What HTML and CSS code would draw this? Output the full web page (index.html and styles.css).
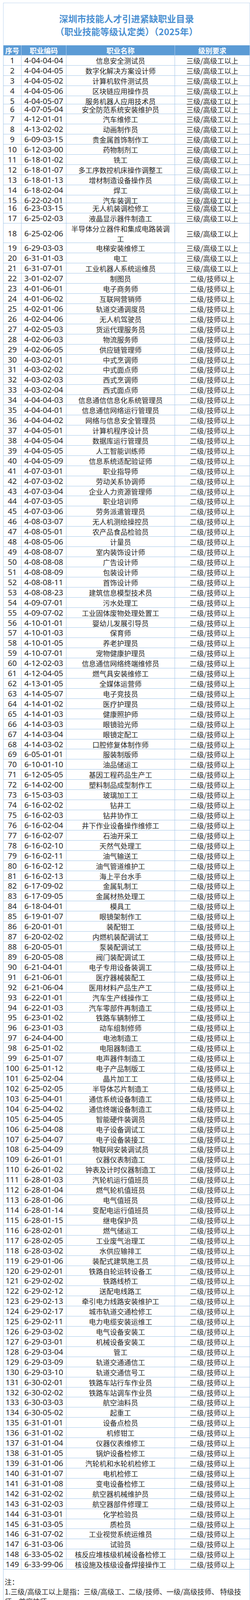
FILE: index.html
```html
<!DOCTYPE html>
<html lang="zh-CN">
<head>
<meta charset="utf-8">
<title>深圳市技能人才引进紧缺职业目录</title>
<link rel="stylesheet" href="styles.css">
</head>
<body>
<div class="sheet">
  <div class="title-box">
    <h1 class="title">深圳市技能人才引进紧缺职业目录<br>（职业技能等级认定类）（2025年）</h1>
  </div>
  <div class="table">
    <div class="row head"><div class="cell">序号</div><div class="cell">职业编码</div><div class="cell">职业名称</div><div class="cell">级别要求</div></div>
    <div class="row"><div class="cell num">1</div><div class="cell code">4-04-04-04</div><div class="cell name">信息安全测试员</div><div class="cell lvl">三级/高级工以上</div></div>
    <div class="row"><div class="cell num">2</div><div class="cell code">4-04-04-05</div><div class="cell name">数字化解决方案设计师</div><div class="cell lvl">三级/高级工以上</div></div>
    <div class="row"><div class="cell num">3</div><div class="cell code">4-04-05-02</div><div class="cell name">计算机软件测试员</div><div class="cell lvl">三级/高级工以上</div></div>
    <div class="row"><div class="cell num">4</div><div class="cell code">4-04-05-06</div><div class="cell name">区块链应用操作员</div><div class="cell lvl">三级/高级工以上</div></div>
    <div class="row short"><div class="cell num">5</div><div class="cell code">4-04-05-07</div><div class="cell name">服务机器人应用技术员</div><div class="cell lvl">三级/高级工以上</div></div>
    <div class="row"><div class="cell num">6</div><div class="cell code">4-07-05-04</div><div class="cell name">安全防范系统安装维护员</div><div class="cell lvl">三级/高级工以上</div></div>
    <div class="row"><div class="cell num">7</div><div class="cell code">4-12-01-01</div><div class="cell name">汽车维修工</div><div class="cell lvl">三级/高级工以上</div></div>
    <div class="row"><div class="cell num">8</div><div class="cell code">4-13-02-02</div><div class="cell name">动画制作员</div><div class="cell lvl">三级/高级工以上</div></div>
    <div class="row"><div class="cell num">9</div><div class="cell code">6-09-03-15</div><div class="cell name">贵金属首饰制作工</div><div class="cell lvl">三级/高级工以上</div></div>
    <div class="row"><div class="cell num">10</div><div class="cell code">6-12-03-00</div><div class="cell name">药物制剂工</div><div class="cell lvl">三级/高级工以上</div></div>
    <div class="row"><div class="cell num">11</div><div class="cell code">6-18-01-02</div><div class="cell name">铣工</div><div class="cell lvl">三级/高级工以上</div></div>
    <div class="row"><div class="cell num">12</div><div class="cell code">6-18-01-07</div><div class="cell name">多工序数控机床操作调整工</div><div class="cell lvl">三级/高级工以上</div></div>
    <div class="row"><div class="cell num">13</div><div class="cell code">6-18-01-13</div><div class="cell name">增材制造设备操作员</div><div class="cell lvl">三级/高级工以上</div></div>
    <div class="row"><div class="cell num">14</div><div class="cell code">6-18-02-04</div><div class="cell name">焊工</div><div class="cell lvl">三级/高级工以上</div></div>
    <div class="row shorter"><div class="cell num">15</div><div class="cell code">6-22-02-01</div><div class="cell name">汽车装调工</div><div class="cell lvl">三级/高级工以上</div></div>
    <div class="row"><div class="cell num">16</div><div class="cell code">6-23-03-15</div><div class="cell name">无人机装调检修工</div><div class="cell lvl">三级/高级工以上</div></div>
    <div class="row"><div class="cell num">17</div><div class="cell code">6-25-02-03</div><div class="cell name">液晶显示器件制造工</div><div class="cell lvl">三级/高级工以上</div></div>
    <div class="row tall"><div class="cell num">18</div><div class="cell code">6-25-02-06</div><div class="cell name">半导体分立器件和集成电路装调工</div><div class="cell lvl">三级/高级工以上</div></div>
    <div class="row"><div class="cell num">19</div><div class="cell code">6-29-03-03</div><div class="cell name">电梯安装维修工</div><div class="cell lvl">三级/高级工以上</div></div>
    <div class="row"><div class="cell num">20</div><div class="cell code">6-31-01-03</div><div class="cell name">电工</div><div class="cell lvl">三级/高级工以上</div></div>
    <div class="row"><div class="cell num">21</div><div class="cell code">6-31-07-01</div><div class="cell name">工业机器人系统运维员</div><div class="cell lvl">三级/高级工以上</div></div>
    <div class="row"><div class="cell num">22</div><div class="cell code">3-01-02-07</div><div class="cell name">制图员</div><div class="cell lvl">二级/技师以上</div></div>
    <div class="row"><div class="cell num">23</div><div class="cell code">4-01-06-01</div><div class="cell name">电子商务师</div><div class="cell lvl">二级/技师以上</div></div>
    <div class="row"><div class="cell num">24</div><div class="cell code">4-01-06-02</div><div class="cell name">互联网营销师</div><div class="cell lvl">二级/技师以上</div></div>
    <div class="row"><div class="cell num">25</div><div class="cell code">4-02-01-06</div><div class="cell name">轨道交通调度员</div><div class="cell lvl">二级/技师以上</div></div>
    <div class="row"><div class="cell num">26</div><div class="cell code">4-02-04-06</div><div class="cell name">无人机驾驶员</div><div class="cell lvl">二级/技师以上</div></div>
    <div class="row"><div class="cell num">27</div><div class="cell code">4-02-05-03</div><div class="cell name">货运代理服务员</div><div class="cell lvl">二级/技师以上</div></div>
    <div class="row"><div class="cell num">28</div><div class="cell code">4-02-06-03</div><div class="cell name">物流服务师</div><div class="cell lvl">二级/技师以上</div></div>
    <div class="row"><div class="cell num">29</div><div class="cell code">4-02-06-05</div><div class="cell name">供应链管理师</div><div class="cell lvl">二级/技师以上</div></div>
    <div class="row"><div class="cell num">30</div><div class="cell code">4-03-02-01</div><div class="cell name">中式烹调师</div><div class="cell lvl">二级/技师以上</div></div>
    <div class="row"><div class="cell num">31</div><div class="cell code">4-03-02-02</div><div class="cell name">中式面点师</div><div class="cell lvl">二级/技师以上</div></div>
    <div class="row"><div class="cell num">32</div><div class="cell code">4-03-02-03</div><div class="cell name">西式烹调师</div><div class="cell lvl">二级/技师以上</div></div>
    <div class="row"><div class="cell num">33</div><div class="cell code">4-03-02-04</div><div class="cell name">西式面点师</div><div class="cell lvl">二级/技师以上</div></div>
    <div class="row"><div class="cell num">34</div><div class="cell code">4-04-04-03</div><div class="cell name">信息通信信息化系统管理员</div><div class="cell lvl">二级/技师以上</div></div>
    <div class="row"><div class="cell num">35</div><div class="cell code">4-04-04-01</div><div class="cell name">信息通信网络运行管理员</div><div class="cell lvl">二级/技师以上</div></div>
    <div class="row"><div class="cell num">36</div><div class="cell code">4-04-04-02</div><div class="cell name">网络与信息安全管理员</div><div class="cell lvl">二级/技师以上</div></div>
    <div class="row"><div class="cell num">37</div><div class="cell code">4-04-05-01</div><div class="cell name">计算机程序设计员</div><div class="cell lvl">二级/技师以上</div></div>
    <div class="row"><div class="cell num">38</div><div class="cell code">4-04-05-04</div><div class="cell name">数据库运行管理员</div><div class="cell lvl">二级/技师以上</div></div>
    <div class="row"><div class="cell num">39</div><div class="cell code">4-04-05-05</div><div class="cell name">人工智能训练师</div><div class="cell lvl">二级/技师以上</div></div>
    <div class="row"><div class="cell num">40</div><div class="cell code">4-04-05-09</div><div class="cell name">信息系统适配验证师</div><div class="cell lvl">二级/技师以上</div></div>
    <div class="row"><div class="cell num">41</div><div class="cell code">4-07-03-01</div><div class="cell name">职业指导师</div><div class="cell lvl">二级/技师以上</div></div>
    <div class="row"><div class="cell num">42</div><div class="cell code">4-07-03-02</div><div class="cell name">劳动关系协调师</div><div class="cell lvl">二级/技师以上</div></div>
    <div class="row"><div class="cell num">43</div><div class="cell code">4-07-03-04</div><div class="cell name">企业人力资源管理师</div><div class="cell lvl">二级/技师以上</div></div>
    <div class="row"><div class="cell num">44</div><div class="cell code">4-07-03-05</div><div class="cell name">职业培训师</div><div class="cell lvl">二级/技师以上</div></div>
    <div class="row"><div class="cell num">45</div><div class="cell code">4-07-03-06</div><div class="cell name">劳务派遣管理员</div><div class="cell lvl">二级/技师以上</div></div>
    <div class="row"><div class="cell num">46</div><div class="cell code">4-08-03-07</div><div class="cell name">无人机测绘操控员</div><div class="cell lvl">二级/技师以上</div></div>
    <div class="row"><div class="cell num">47</div><div class="cell code">4-08-05-01</div><div class="cell name">农产品食品检验员</div><div class="cell lvl">二级/技师以上</div></div>
    <div class="row"><div class="cell num">48</div><div class="cell code">4-08-05-06</div><div class="cell name">计量员</div><div class="cell lvl">二级/技师以上</div></div>
    <div class="row"><div class="cell num">49</div><div class="cell code">4-08-08-07</div><div class="cell name">室内装饰设计师</div><div class="cell lvl">二级/技师以上</div></div>
    <div class="row"><div class="cell num">50</div><div class="cell code">4-08-08-08</div><div class="cell name">广告设计师</div><div class="cell lvl">二级/技师以上</div></div>
    <div class="row"><div class="cell num">51</div><div class="cell code">4-08-08-09</div><div class="cell name">包装设计师</div><div class="cell lvl">二级/技师以上</div></div>
    <div class="row"><div class="cell num">52</div><div class="cell code">4-08-08-11</div><div class="cell name">首饰设计师</div><div class="cell lvl">二级/技师以上</div></div>
    <div class="row"><div class="cell num">53</div><div class="cell code">4-08-08-23</div><div class="cell name">建筑信息模型技术员</div><div class="cell lvl">二级/技师以上</div></div>
    <div class="row"><div class="cell num">54</div><div class="cell code">4-09-07-01</div><div class="cell name">污水处理工</div><div class="cell lvl">二级/技师以上</div></div>
    <div class="row"><div class="cell num">55</div><div class="cell code">4-09-07-02</div><div class="cell name">工业固体废物处理处置工</div><div class="cell lvl">二级/技师以上</div></div>
    <div class="row"><div class="cell num">56</div><div class="cell code">4-10-01-01</div><div class="cell name">婴幼儿发展引导员</div><div class="cell lvl">二级/技师以上</div></div>
    <div class="row"><div class="cell num">57</div><div class="cell code">4-10-01-03</div><div class="cell name">保育师</div><div class="cell lvl">二级/技师以上</div></div>
    <div class="row"><div class="cell num">58</div><div class="cell code">4-10-01-05</div><div class="cell name">养老护理员</div><div class="cell lvl">二级/技师以上</div></div>
    <div class="row"><div class="cell num">59</div><div class="cell code">4-10-07-01</div><div class="cell name">宠物健康护理员</div><div class="cell lvl">二级/技师以上</div></div>
    <div class="row"><div class="cell num">60</div><div class="cell code">4-12-02-03</div><div class="cell name">信息通信网络终端维修员</div><div class="cell lvl">二级/技师以上</div></div>
    <div class="row"><div class="cell num">61</div><div class="cell code">4-12-04-05</div><div class="cell name">燃气具安装维修工</div><div class="cell lvl">二级/技师以上</div></div>
    <div class="row"><div class="cell num">62</div><div class="cell code">4-13-01-05</div><div class="cell name">全媒体运营师</div><div class="cell lvl">二级/技师以上</div></div>
    <div class="row"><div class="cell num">63</div><div class="cell code">4-14-05-07</div><div class="cell name">电子竞技员</div><div class="cell lvl">二级/技师以上</div></div>
    <div class="row"><div class="cell num">64</div><div class="cell code">4-14-01-02</div><div class="cell name">医疗护理员</div><div class="cell lvl">二级/技师以上</div></div>
    <div class="row"><div class="cell num">65</div><div class="cell code">4-14-01-03</div><div class="cell name">健康照护师</div><div class="cell lvl">二级/技师以上</div></div>
    <div class="row"><div class="cell num">66</div><div class="cell code">4-14-03-03</div><div class="cell name">眼镜验光师</div><div class="cell lvl">二级/技师以上</div></div>
    <div class="row"><div class="cell num">67</div><div class="cell code">4-14-03-04</div><div class="cell name">眼镜定配工</div><div class="cell lvl">二级/技师以上</div></div>
    <div class="row"><div class="cell num">68</div><div class="cell code">4-14-03-02</div><div class="cell name">口腔修复体制作师</div><div class="cell lvl">二级/技师以上</div></div>
    <div class="row"><div class="cell num">69</div><div class="cell code">6-05-01-01</div><div class="cell name">服装制版师</div><div class="cell lvl">二级/技师以上</div></div>
    <div class="row"><div class="cell num">70</div><div class="cell code">6-10-01-10</div><div class="cell name">油品储运工</div><div class="cell lvl">二级/技师以上</div></div>
    <div class="row"><div class="cell num">71</div><div class="cell code">6-12-05-05</div><div class="cell name">基因工程药品生产工</div><div class="cell lvl">二级/技师以上</div></div>
    <div class="row"><div class="cell num">72</div><div class="cell code">6-14-02-00</div><div class="cell name">塑料制品成型制作工</div><div class="cell lvl">二级/技师以上</div></div>
    <div class="row"><div class="cell num">73</div><div class="cell code">6-15-03-03</div><div class="cell name">玻璃加工工</div><div class="cell lvl">二级/技师以上</div></div>
    <div class="row"><div class="cell num">74</div><div class="cell code">6-16-02-02</div><div class="cell name">钻井工</div><div class="cell lvl">二级/技师以上</div></div>
    <div class="row"><div class="cell num">75</div><div class="cell code">6-16-02-03</div><div class="cell name">钻井协作工</div><div class="cell lvl">二级/技师以上</div></div>
    <div class="row"><div class="cell num">76</div><div class="cell code">6-16-02-04</div><div class="cell name">井下作业设备操作维修工</div><div class="cell lvl">二级/技师以上</div></div>
    <div class="row"><div class="cell num">77</div><div class="cell code">6-16-02-07</div><div class="cell name">石油开采工</div><div class="cell lvl">二级/技师以上</div></div>
    <div class="row"><div class="cell num">78</div><div class="cell code">6-16-02-10</div><div class="cell name">天然气处理工</div><div class="cell lvl">二级/技师以上</div></div>
    <div class="row"><div class="cell num">79</div><div class="cell code">6-16-02-11</div><div class="cell name">油气输送工</div><div class="cell lvl">二级/技师以上</div></div>
    <div class="row"><div class="cell num">80</div><div class="cell code">6-16-02-12</div><div class="cell name">油气管道维护工</div><div class="cell lvl">二级/技师以上</div></div>
    <div class="row"><div class="cell num">81</div><div class="cell code">6-16-02-13</div><div class="cell name">海上平台水手</div><div class="cell lvl">二级/技师以上</div></div>
    <div class="row"><div class="cell num">82</div><div class="cell code">6-17-09-02</div><div class="cell name">金属轧制工</div><div class="cell lvl">二级/技师以上</div></div>
    <div class="row"><div class="cell num">83</div><div class="cell code">6-17-09-05</div><div class="cell name">金属材热处理工</div><div class="cell lvl">二级/技师以上</div></div>
    <div class="row"><div class="cell num">84</div><div class="cell code">6-18-04-01</div><div class="cell name">模具工</div><div class="cell lvl">二级/技师以上</div></div>
    <div class="row"><div class="cell num">85</div><div class="cell code">6-19-01-07</div><div class="cell name">眼镜架制作工</div><div class="cell lvl">二级/技师以上</div></div>
    <div class="row"><div class="cell num">86</div><div class="cell code">6-20-01-01</div><div class="cell name">装配钳工</div><div class="cell lvl">二级/技师以上</div></div>
    <div class="row"><div class="cell num">87</div><div class="cell code">6-20-02-02</div><div class="cell name">内燃机装配调试工</div><div class="cell lvl">二级/技师以上</div></div>
    <div class="row"><div class="cell num">88</div><div class="cell code">6-20-05-01</div><div class="cell name">泵装配调试工</div><div class="cell lvl">二级/技师以上</div></div>
    <div class="row"><div class="cell num">89</div><div class="cell code">6-20-05-08</div><div class="cell name">阀门装配调试工</div><div class="cell lvl">二级/技师以上</div></div>
    <div class="row"><div class="cell num">90</div><div class="cell code">6-21-04-01</div><div class="cell name">电子专用设备装调工</div><div class="cell lvl">二级/技师以上</div></div>
    <div class="row"><div class="cell num">91</div><div class="cell code">6-21-06-01</div><div class="cell name">医疗器械装配工</div><div class="cell lvl">二级/技师以上</div></div>
    <div class="row"><div class="cell num">92</div><div class="cell code">6-21-06-04</div><div class="cell name">医用材料产品生产工</div><div class="cell lvl">二级/技师以上</div></div>
    <div class="row"><div class="cell num">93</div><div class="cell code">6-22-01-01</div><div class="cell name">汽车生产线操作工</div><div class="cell lvl">二级/技师以上</div></div>
    <div class="row"><div class="cell num">94</div><div class="cell code">6-22-01-03</div><div class="cell name">汽车零部件再制造工</div><div class="cell lvl">二级/技师以上</div></div>
    <div class="row"><div class="cell num">95</div><div class="cell code">6-23-01-02</div><div class="cell name">铁路车辆制修工</div><div class="cell lvl">二级/技师以上</div></div>
    <div class="row"><div class="cell num">96</div><div class="cell code">6-23-01-03</div><div class="cell name">动车组制修师</div><div class="cell lvl">二级/技师以上</div></div>
    <div class="row"><div class="cell num">97</div><div class="cell code">6-24-04-00</div><div class="cell name">电池制造工</div><div class="cell lvl">二级/技师以上</div></div>
    <div class="row"><div class="cell num">98</div><div class="cell code">6-25-01-02</div><div class="cell name">电阻器制造工</div><div class="cell lvl">二级/技师以上</div></div>
    <div class="row"><div class="cell num">99</div><div class="cell code">6-25-01-07</div><div class="cell name">电声器件制造工</div><div class="cell lvl">二级/技师以上</div></div>
    <div class="row"><div class="cell num">100</div><div class="cell code">6-25-01-12</div><div class="cell name">电子产品制版工</div><div class="cell lvl">二级/技师以上</div></div>
    <div class="row"><div class="cell num">101</div><div class="cell code">6-25-02-04</div><div class="cell name">晶片加工工</div><div class="cell lvl">二级/技师以上</div></div>
    <div class="row"><div class="cell num">102</div><div class="cell code">6-25-02-05</div><div class="cell name">半导体芯片制造工</div><div class="cell lvl">二级/技师以上</div></div>
    <div class="row"><div class="cell num">103</div><div class="cell code">6-25-04-01</div><div class="cell name">通信系统设备制造工</div><div class="cell lvl">二级/技师以上</div></div>
    <div class="row"><div class="cell num">104</div><div class="cell code">6-25-04-02</div><div class="cell name">通信终端设备制造工</div><div class="cell lvl">二级/技师以上</div></div>
    <div class="row"><div class="cell num">105</div><div class="cell code">6-25-04-05</div><div class="cell name">智能硬件装调员</div><div class="cell lvl">二级/技师以上</div></div>
    <div class="row"><div class="cell num">106</div><div class="cell code">6-25-04-08</div><div class="cell name">电子设备调试工</div><div class="cell lvl">二级/技师以上</div></div>
    <div class="row"><div class="cell num">107</div><div class="cell code">6-25-04-07</div><div class="cell name">电子设备装接工</div><div class="cell lvl">二级/技师以上</div></div>
    <div class="row"><div class="cell num">108</div><div class="cell code">6-25-04-09</div><div class="cell name">物联网安装调试员</div><div class="cell lvl">二级/技师以上</div></div>
    <div class="row"><div class="cell num">109</div><div class="cell code">6-26-01-01</div><div class="cell name">仪器仪表制造工</div><div class="cell lvl">二级/技师以上</div></div>
    <div class="row"><div class="cell num">110</div><div class="cell code">6-26-01-02</div><div class="cell name">钟表及计时仪器制造工</div><div class="cell lvl">二级/技师以上</div></div>
    <div class="row"><div class="cell num">111</div><div class="cell code">6-28-01-03</div><div class="cell name">汽轮机运行值班员</div><div class="cell lvl">二级/技师以上</div></div>
    <div class="row"><div class="cell num">112</div><div class="cell code">6-28-01-04</div><div class="cell name">燃气轮机值班员</div><div class="cell lvl">二级/技师以上</div></div>
    <div class="row"><div class="cell num">113</div><div class="cell code">6-28-01-06</div><div class="cell name">电气值班员</div><div class="cell lvl">二级/技师以上</div></div>
    <div class="row"><div class="cell num">114</div><div class="cell code">6-28-01-14</div><div class="cell name">变配电运行值班员</div><div class="cell lvl">二级/技师以上</div></div>
    <div class="row"><div class="cell num">115</div><div class="cell code">6-28-01-15</div><div class="cell name">继电保护员</div><div class="cell lvl">二级/技师以上</div></div>
    <div class="row"><div class="cell num">116</div><div class="cell code">6-28-02-01</div><div class="cell name">燃气储运工</div><div class="cell lvl">二级/技师以上</div></div>
    <div class="row"><div class="cell num">117</div><div class="cell code">6-28-02-05</div><div class="cell name">工业废气治理工</div><div class="cell lvl">二级/技师以上</div></div>
    <div class="row"><div class="cell num">118</div><div class="cell code">6-28-03-02</div><div class="cell name">水供应输排工</div><div class="cell lvl">二级/技师以上</div></div>
    <div class="row"><div class="cell num">119</div><div class="cell code">6-29-01-06</div><div class="cell name">装配式建筑施工员</div><div class="cell lvl">二级/技师以上</div></div>
    <div class="row"><div class="cell num">120</div><div class="cell code">6-29-02-01</div><div class="cell name">铁路自轮运转设备工</div><div class="cell lvl">二级/技师以上</div></div>
    <div class="row"><div class="cell num">121</div><div class="cell code">6-29-02-02</div><div class="cell name">铁路线桥工</div><div class="cell lvl">二级/技师以上</div></div>
    <div class="row"><div class="cell num">122</div><div class="cell code">6-29-02-12</div><div class="cell name">送配电线路工</div><div class="cell lvl">二级/技师以上</div></div>
    <div class="row"><div class="cell num">123</div><div class="cell code">6-29-02-13</div><div class="cell name">牵引电力线路安装维护工</div><div class="cell lvl">二级/技师以上</div></div>
    <div class="row"><div class="cell num">124</div><div class="cell code">6-29-02-17</div><div class="cell name">城市轨道交通检修工</div><div class="cell lvl">二级/技师以上</div></div>
    <div class="row"><div class="cell num">125</div><div class="cell code">6-29-02-11</div><div class="cell name">电力电缆安装运维工</div><div class="cell lvl">二级/技师以上</div></div>
    <div class="row"><div class="cell num">126</div><div class="cell code">6-29-03-02</div><div class="cell name">电气设备安装工</div><div class="cell lvl">二级/技师以上</div></div>
    <div class="row"><div class="cell num">127</div><div class="cell code">6-29-03-01</div><div class="cell name">机械设备安装工</div><div class="cell lvl">二级/技师以上</div></div>
    <div class="row"><div class="cell num">128</div><div class="cell code">6-29-03-04</div><div class="cell name">管工</div><div class="cell lvl">二级/技师以上</div></div>
    <div class="row"><div class="cell num">129</div><div class="cell code">6-29-03-09</div><div class="cell name">轨道交通通信工</div><div class="cell lvl">二级/技师以上</div></div>
    <div class="row"><div class="cell num">130</div><div class="cell code">6-29-03-10</div><div class="cell name">轨道交通信号工</div><div class="cell lvl">二级/技师以上</div></div>
    <div class="row"><div class="cell num">131</div><div class="cell code">6-30-02-01</div><div class="cell name">铁路车站行车作业员</div><div class="cell lvl">二级/技师以上</div></div>
    <div class="row"><div class="cell num">132</div><div class="cell code">6-30-02-02</div><div class="cell name">铁路车站调车作业员</div><div class="cell lvl">二级/技师以上</div></div>
    <div class="row"><div class="cell num">133</div><div class="cell code">6-30-03-03</div><div class="cell name">航空油料员</div><div class="cell lvl">二级/技师以上</div></div>
    <div class="row"><div class="cell num">134</div><div class="cell code">6-30-05-02</div><div class="cell name">起重工</div><div class="cell lvl">二级/技师以上</div></div>
    <div class="row"><div class="cell num">135</div><div class="cell code">6-31-01-01</div><div class="cell name">设备点检员</div><div class="cell lvl">二级/技师以上</div></div>
    <div class="row"><div class="cell num">136</div><div class="cell code">6-31-01-02</div><div class="cell name">机修钳工</div><div class="cell lvl">二级/技师以上</div></div>
    <div class="row"><div class="cell num">137</div><div class="cell code">6-31-01-04</div><div class="cell name">仪器仪表维修工</div><div class="cell lvl">二级/技师以上</div></div>
    <div class="row"><div class="cell num">138</div><div class="cell code">6-31-01-05</div><div class="cell name">锅炉设备检修工</div><div class="cell lvl">二级/技师以上</div></div>
    <div class="row"><div class="cell num">139</div><div class="cell code">6-31-01-06</div><div class="cell name">汽轮机和水轮机检修工</div><div class="cell lvl">二级/技师以上</div></div>
    <div class="row"><div class="cell num">140</div><div class="cell code">6-31-01-07</div><div class="cell name">电机检修工</div><div class="cell lvl">二级/技师以上</div></div>
    <div class="row"><div class="cell num">141</div><div class="cell code">6-31-01-08</div><div class="cell name">变电设备检修工</div><div class="cell lvl">二级/技师以上</div></div>
    <div class="row"><div class="cell num">142</div><div class="cell code">6-31-02-02</div><div class="cell name">航空器机械维护员</div><div class="cell lvl">二级/技师以上</div></div>
    <div class="row"><div class="cell num">143</div><div class="cell code">6-31-02-03</div><div class="cell name">航空器部件修理工</div><div class="cell lvl">二级/技师以上</div></div>
    <div class="row"><div class="cell num">144</div><div class="cell code">6-31-03-01</div><div class="cell name">化学检验员</div><div class="cell lvl">二级/技师以上</div></div>
    <div class="row"><div class="cell num">145</div><div class="cell code">6-31-03-05</div><div class="cell name">质检员</div><div class="cell lvl">二级/技师以上</div></div>
    <div class="row"><div class="cell num">146</div><div class="cell code">6-31-07-02</div><div class="cell name">工业视觉系统运维员</div><div class="cell lvl">二级/技师以上</div></div>
    <div class="row"><div class="cell num">147</div><div class="cell code">6-31-03-06</div><div class="cell name">试验员</div><div class="cell lvl">二级/技师以上</div></div>
    <div class="row"><div class="cell num">148</div><div class="cell code">6-33-05-02</div><div class="cell name">核反应堆核级机械设备检修工</div><div class="cell lvl">二级/技师以上</div></div>
    <div class="row"><div class="cell num">149</div><div class="cell code">6-33-99-06</div><div class="cell name">核设施及核级设备焊接操作工</div><div class="cell lvl">二级/技师以上</div></div>
  </div>
  <div class="notes">
    <p>注：</p>
    <p>1.三级/高级工以上是指：三级/高级工、二级/技师、一级/高级技师、 特级技<br>师、首席技师。</p>
    <p>2.二级/技师以上是指：二级/技师、一级/高级技师、特级技师、首席技师。</p>
  </div>
  <div class="tail"><div></div><div></div><div></div><div></div></div>
</div>
</body>
</html>
```
FILE: styles.css
```css
html, body {
  margin: 0;
  padding: 0;
  background: #ffffff;
}

body {
  font-family: "Noto Sans CJK SC", "Noto Sans", sans-serif;
  color: #262626;
}

.sheet {
  margin: 7px 0 0 8px;
  width: 632px;
}

.title-box {
  box-sizing: border-box;
  height: 108.7px;
  padding-top: 4px;
  border: 1px solid #bcd5ee;
  border-bottom: none;
  display: flex;
  align-items: center;
  justify-content: center;
}

.title {
  margin: 0;
  font-family: "Noto Sans CJK SC", sans-serif;
  font-size: 23px;
  font-weight: 700;
  line-height: 33px;
  color: #4a90d2;
  text-align: center;
}

.table {
  border-left: 1px solid #a4c6e8;
}

.row {
  display: grid;
  grid-template-columns: 46px 115px 278px 1fr;
  box-sizing: border-box;
  height: 25.935px;
  border-bottom: 1px solid #a4c6e8;
}

.row.short {
  height: 20.6px;
}

.row.shorter {
  height: 20px;
}

.row.tall {
  height: 50.7px;
}

.cell {
  display: flex;
  align-items: center;
  justify-content: center;
  box-sizing: border-box;
  border-right: 1px solid #a4c6e8;
  white-space: nowrap;
  font-size: 18px;
  line-height: 26px;
}

.row.head {
  height: 26.6px;
  background: #5b9bd5;
  border-bottom: 1px solid #a4c6e8;
}

.row.head .cell {
  color: #ffffff;
  font-weight: 700;
  font-size: 18px;
  border-right-color: #b9d3ee;
}

.num,
.code {
  font-family: "Noto Sans", "Noto Sans CJK SC", sans-serif;
  font-size: 20px;
  line-height: 26px;
}

.name {
  padding: 0 6px;
}

.row.tall .name {
  white-space: normal;
  text-align: center;
  line-height: 26px;
}

.notes {
  box-sizing: border-box;
  height: 138px;
  padding: 19px 3px 0 3px;
  border: 1px solid #a4c6e8;
  border-top: none;
  font-size: 18px;
  line-height: 25px;
  color: #262626;
}

.notes p {
  margin: 0;
}

.tail {
  display: grid;
  grid-template-columns: 46px 115px 278px 1fr;
  height: 10px;
  border-left: 1px solid #e2e2e2;
}

.tail div {
  border-right: 1px solid #e2e2e2;
}

.tail div:last-child {
  border-right: none;
}
```
